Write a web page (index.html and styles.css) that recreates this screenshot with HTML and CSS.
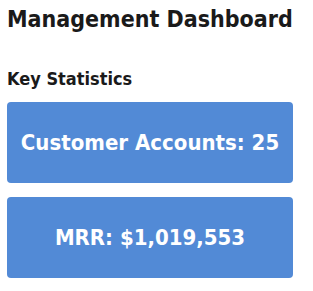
FILE: index.html
```html
<!DOCTYPE html>
<html>
<head>
  <meta charset="UTF-8">
  <title>Management Dashboard</title>
  <link rel="stylesheet" href="styles.css">
</head>
<body>
  <h1 class="page-title">Management Dashboard</h1>
  <h3 class="section-title">Key Statistics</h3>
  <div class="stats">
    <div class="stat-card">Customer Accounts: 25</div>
    <div class="stat-card">MRR: $1,019,553</div>
  </div>
</body>
</html>
```

FILE: styles.css
```css
body {
  margin: 0;
  padding: 0 7px;
  font-family: "DejaVu Sans Condensed", "DejaVu Sans", sans-serif;
  background: #ffffff;
  color: #1a1a1a;
}

.page-title {
  font-size: 23px;
  line-height: 28px;
  margin: 5px 0 0;
}

.section-title {
  font-size: 18px;
  line-height: 22px;
  margin: 35px 0 0;
}

.stats {
  display: flex;
  flex-direction: column;
  gap: 14px;
  margin-top: 12px;
  width: 286px;
}

.stat-card {
  background: #528ad6;
  color: white;
  border-radius: 4px;
  height: 81px;
  display: flex;
  align-items: center;
  justify-content: center;
  font-size: 22px;
  font-weight: bold;
}
```
